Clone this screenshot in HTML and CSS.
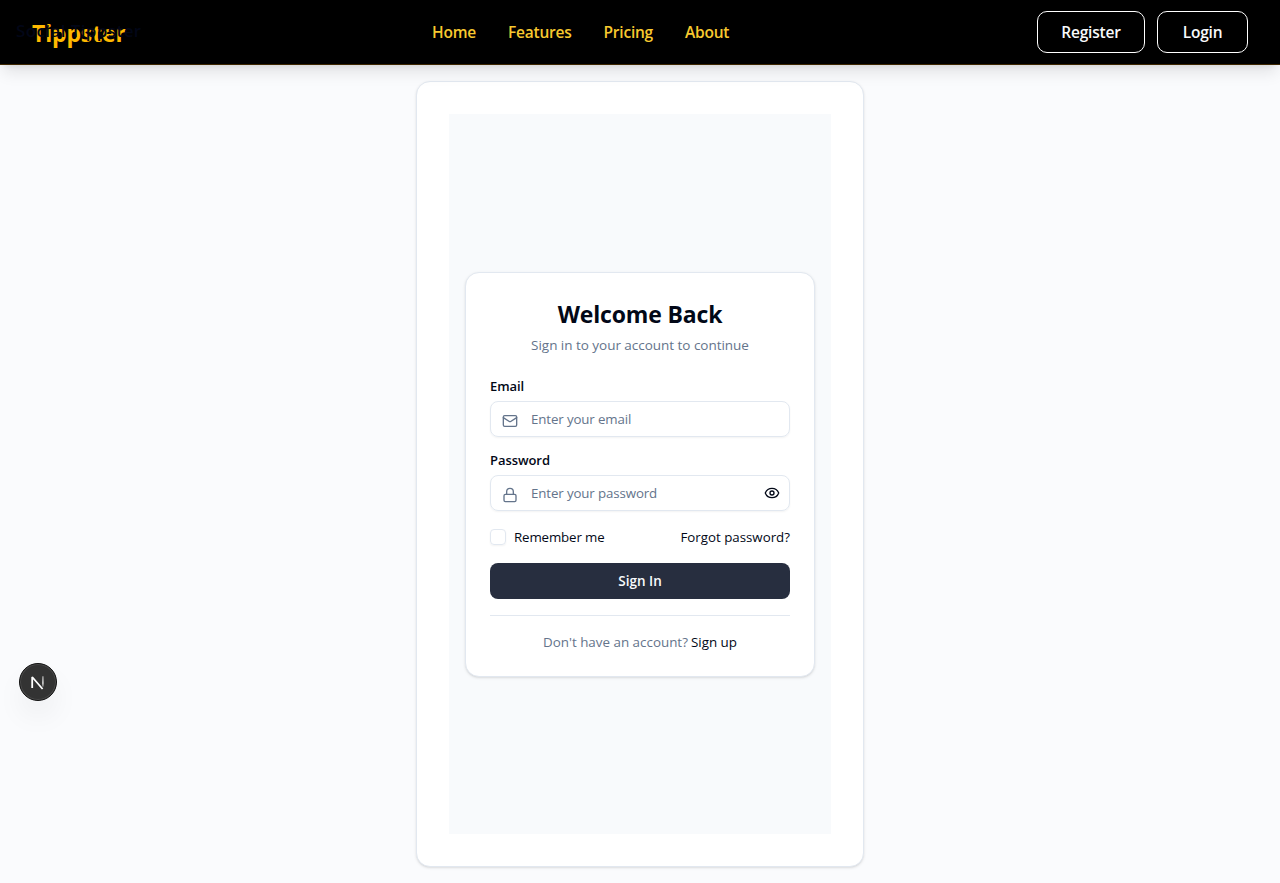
FILE: index.html
```html
<!DOCTYPE html>
<html lang="en">
<head>
<meta charset="utf-8">
<title>Social Tippster</title>
<link rel="stylesheet" href="styles.css">
</head>
<body>
<header class="topbar">
  <a class="brand">Tippster</a>
  <span class="site-title">Social Tippster</span>
  <nav class="nav"><a>Home</a><a>Features</a><a>Pricing</a><a>About</a></nav>
  <div class="actions"><a class="outline register">Register</a><a class="outline login">Login</a></div>
</header>
<main class="shell">
  <div class="panel">
    <form class="card">
      <h1 class="title">Welcome Back</h1>
      <p class="subtitle">Sign in to your account to continue</p>
      <label class="label">Email</label>
      <div class="field">
        <svg class="icon" viewBox="0 0 24 24"><rect x="2" y="4" width="20" height="16" rx="2"/><path d="m22 7-8.97 5.7a1.94 1.94 0 0 1-2.06 0L2 7"/></svg>
        <span class="hint">Enter your email</span>
      </div>
      <label class="label label-password">Password</label>
      <div class="field">
        <svg class="icon" viewBox="0 0 24 24"><rect x="3" y="11" width="18" height="11" rx="2"/><path d="M7 11V7a5 5 0 0 1 10 0v4"/></svg>
        <span class="hint">Enter your password</span>
        <svg class="eye" viewBox="0 0 24 24"><path d="M2.062 12.348a1 1 0 0 1 0-.696 10.75 10.75 0 0 1 19.876 0 1 1 0 0 1 0 .696 10.75 10.75 0 0 1-19.876 0"/><circle cx="12" cy="12" r="3"/></svg>
      </div>
      <div class="options"><span class="check"></span><span class="remember">Remember me</span><a class="forgot">Forgot password?</a></div>
      <div class="submit">Sign In</div>
      <div class="signup"><span class="ask">Don't have an account?</span><a>Sign up</a></div>
    </form>
  </div>
</main>
<div class="devtools">
  <svg viewBox="0 0 38 38"><defs><linearGradient id="fade" x1="0" y1="13" x2="0" y2="25" gradientUnits="userSpaceOnUse"><stop offset="0" stop-color="#fff" stop-opacity=".45"/><stop offset=".6" stop-color="#fff" stop-opacity=".8"/><stop offset="1" stop-color="#fff" stop-opacity=".1"/></linearGradient></defs><path d="M13.2 25V14l10.4 12" fill="none" stroke="#fff" stroke-width="1.8" stroke-linejoin="bevel"/><path d="M23.9 13.2v10.5" stroke="url(#fade)" stroke-width="1.6"/></svg>
</div>
</body>
</html>
```
FILE: styles.css
```css
* { box-sizing: border-box; }
body { margin: 0; height: 883px; overflow: hidden; background: #fafbfd; color: #020817; font-family: "Open Sans", "Noto Sans", sans-serif; font-size: 14px; line-height: 20px; }
span, a { white-space: nowrap; }
.topbar { position: relative; height: 65px; padding: 0 32px; display: grid; grid-template-columns: 400px 1fr auto; align-items: center; background: #000; border-bottom: 1px solid #3d2600; box-shadow: 0 10px 15px -3px rgba(0,0,0,.1), 0 4px 6px -4px rgba(0,0,0,.1); }
.brand { padding-top: 2px; color: #ffb900; font-size: 23px; font-weight: 700; line-height: 32px; letter-spacing: -.15px; }
.site-title { position: absolute; left: 16px; top: 17px; font-size: 17px; font-weight: 600; line-height: 28px; letter-spacing: .4px; color: #020617; }
.nav { display: flex; gap: 32px; color: #f8c92f; font-size: 15.5px; font-weight: 600; line-height: 24px; letter-spacing: -.22px; }
.actions { display: flex; gap: 12px; }
.outline { display: flex; align-items: center; justify-content: center; height: 42px; border: 1px solid #fff; border-radius: 10px; color: #f8fafc; font-size: 15.5px; font-weight: 600; letter-spacing: -.2px; }
.register { width: 108px; }
.login { width: 91px; }
.shell { width: 448px; height: 786px; margin: 16px auto 0; padding: 32px; background: #fff; border: 1px solid #e2e8f0; border-radius: 14px; box-shadow: 0 1px 3px rgba(0,0,0,.1), 0 1px 2px -1px rgba(0,0,0,.1); }
.panel { height: 720px; padding: 0 16px; display: flex; align-items: center; background: #f8fafc; }
.card { width: 350px; height: 405px; padding: 24px; display: flex; flex-direction: column; background: #fff; border: 1px solid #e2e8f0; border-radius: 14px; box-shadow: 0 1px 3px rgba(0,0,0,.1), 0 1px 2px -1px rgba(0,0,0,.1); }
.title { margin: 1px 0 1px; text-align: center; font-size: 23px; font-weight: 700; line-height: 32px; letter-spacing: -.15px; }
.subtitle { margin: 4px 0 0; text-align: center; color: #64748b; font-size: 13.5px; letter-spacing: -.03px; }
.label { margin-top: 21px; height: 20px; font-size: 13px; font-weight: 600; letter-spacing: -.06px; }
.label-password { margin-top: 13px; }
.field { height: 36px; margin-top: 5px; padding: 0 9px 0 11px; display: flex; align-items: center; border: 1px solid #e2e8f0; border-radius: 8px; box-shadow: 0 1px 2px rgba(0,0,0,.05); }
.icon { width: 16px; height: 16px; margin: 4px 13px 0 0; fill: none; stroke: #64748b; stroke-width: 2; stroke-linecap: round; stroke-linejoin: round; }
.hint { color: #64748b; font-size: 13.3px; letter-spacing: -.12px; }
.eye { width: 16px; height: 16px; margin-left: auto; fill: none; stroke: #020817; stroke-width: 2; stroke-linecap: round; stroke-linejoin: round; }
.options { margin-top: 16px; height: 20px; display: flex; align-items: center; font-size: 13.3px; }
.check { width: 16px; height: 16px; margin-right: 8px; border: 1px solid #e2e8f0; border-radius: 4px; box-shadow: 0 1px 2px rgba(0,0,0,.05); }
.remember { letter-spacing: -.14px; }
.forgot { margin-left: auto; }
.submit { height: 36px; margin-top: 16px; padding-top: 1px; display: flex; align-items: center; justify-content: center; background: #272e3f; color: #f8fafc; border-radius: 8px; font-size: 13.5px; font-weight: 600; }
.signup { margin-top: 16px; padding-top: 16px; display: flex; justify-content: center; gap: 3px; border-top: 1px solid #e2e8f0; font-size: 13.4px; }
.ask { color: #64748b; }
.devtools { position: fixed; left: 19px; top: 663px; width: 38px; height: 38px; border-radius: 50%; background: #333; border: 1px solid #111; box-shadow: inset 0 0 0 1px #4a4a4a, 0 16px 32px -8px rgba(0,0,0,.14); }
.devtools svg { display: block; width: 38px; height: 38px; margin: -1px; }
```
